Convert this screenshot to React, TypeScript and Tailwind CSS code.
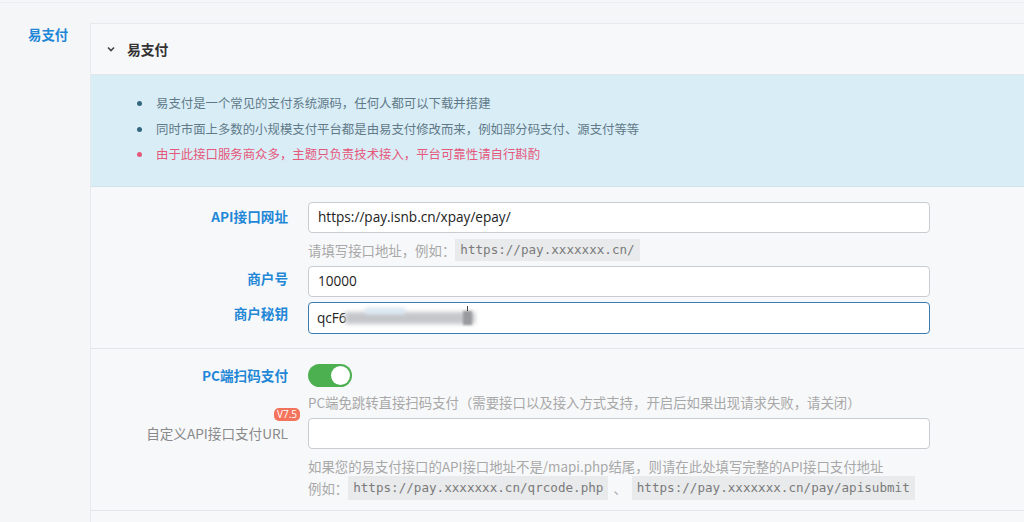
import React from "react";

const cjk = { fontFamily: '"Noto Sans CJK SC", "Noto Sans", sans-serif' };
const latin = { fontFamily: '"Open Sans", "Noto Sans CJK SC", sans-serif' };
const mono = { fontFamily: '"DejaVu Sans Mono", "Liberation Mono", monospace' };

function Code({ children }: { children: React.ReactNode }) {
  return (
    <span className="bg-[#e9eaec] text-[#7a7a7a] px-[5px] py-[2px] text-[12.6px]" style={mono}>
      {children}
    </span>
  );
}

function Label({ children, bold = true, className = "" }: { children: React.ReactNode; bold?: boolean; className?: string }) {
  return (
    <div
      className={`w-[197px] shrink-0 text-right text-[13.6px] ${bold ? "font-bold text-[#1f87d6]" : "text-[#8a8a8a]"} ${className}`}
      style={cjk}
    >
      {children}
    </div>
  );
}

export default function App() {
  return (
    <div className="w-[1024px] h-[522px] bg-[#f5f6f8] overflow-hidden" style={cjk}>
      <div className="h-[3px] border-b border-[#eceef1]" />
      <div className="flex pt-[20px]">
        <div className="w-[90px] shrink-0 pl-[28px] pt-[1px] text-[13.4px] font-bold text-[#1f87d6] leading-[20px]">
          易支付
        </div>
        <div className="w-[960px] shrink-0 border border-[#e7e9ec] bg-[#f7f8fa]">
          {/* header */}
          <div className="h-[51px] flex items-center pl-[15px] border-b border-[#e3e6e9]">
            <svg width="10" height="10" viewBox="0 0 10 10" className="mr-[11px]">
              <path d="M2 3.5 L5 6.5 L8 3.5" fill="none" stroke="#444" strokeWidth="1.6" />
            </svg>
            <span className="text-[13.8px] font-bold text-[#333]">易支付</span>
          </div>
          {/* info */}
          <div className="h-[112px] bg-[#d9edf7] pt-[16px] pl-[44px] border-b border-[#d0e4ee]">
            <ul className="text-[12.4px] leading-[25.5px]">
              <li className="flex items-center text-[#607a88]">
                <span className="w-[5px] h-[5px] rounded-full bg-[#33677f] mr-[14px] ml-[2px]" />
                易支付是一个常见的支付系统源码，任何人都可以下载并搭建
              </li>
              <li className="flex items-center text-[#607a88]">
                <span className="w-[5px] h-[5px] rounded-full bg-[#33677f] mr-[14px] ml-[2px]" />
                同时市面上多数的小规模支付平台都是由易支付修改而来，例如部分码支付、源支付等等
              </li>
              <li className="flex items-center text-[#e5587a]">
                <span className="w-[5px] h-[5px] rounded-full bg-[#e5587a] mr-[14px] ml-[2px]" />
                由于此接口服务商众多，主题只负责技术接入，平台可靠性请自行斟酌
              </li>
            </ul>
          </div>
          {/* section 1 */}
          <div className="pt-[15px] pb-[14px] border-b border-[#e3e6e9]">
            <div className="flex gap-[20px]">
              <Label className="pt-[4px]">API接口网址</Label>
              <div className="w-[622px]">
                <div
                  className="h-[31px] bg-white border border-[#c9ccd0] rounded-[4px] flex items-center px-[9px] text-[13.6px] text-[#222]"
                  style={latin}
                >
                  https://pay.isnb.cn/xpay/epay/
                </div>
                <div className="h-[33px] pt-[1px] flex items-center text-[13.4px] text-[#a8a8a8]">
                  请填写接口地址，例如：<Code>https://pay.xxxxxxx.cn/</Code>
                </div>
              </div>
            </div>
            <div className="flex gap-[20px]">
              <Label className="pt-[2px]">商户号</Label>
              <div
                className="w-[622px] h-[31px] bg-white border border-[#c9ccd0] rounded-[4px] flex items-center px-[9px] text-[13.6px] text-[#222]"
                style={latin}
              >
                10000
              </div>
            </div>
            <div className="flex gap-[20px] mt-[5px]">
              <Label className="pt-[1px]">商户秘钥</Label>
              <div
                className="w-[622px] h-[32px] bg-white border-[1.5px] border-[#3a7bb0] rounded-[4px] flex items-center px-[8px] text-[13.6px] text-[#222]"
                style={latin}
              >
                qcF6
                <span className="relative ml-[-2px] h-[20px] w-[140px] inline-block">
                  <span className="absolute left-0 top-[4px] w-[130px] h-[12px] bg-[#c4c6ca] blur-[2px]" />
                  <span className="absolute left-[20px] top-[0px] w-[40px] h-[6px] bg-[#d8e6f2] blur-[2px]" />
                  <span className="absolute left-[118px] top-[3px] w-[9px] h-[14px] bg-[#9a9b9e] blur-[1px]" />
                  <span className="absolute left-[122px] top-[-2px] w-[1px] h-[5px] bg-[#444]" />
                </span>
              </div>
            </div>
          </div>
          {/* section 2 */}
          <div className="pt-[15px] pb-[10px] border-b border-[#e3e6e9]">
            <div className="flex gap-[20px]">
              <Label className="pt-[1px]">PC端扫码支付</Label>
              <div className="w-[622px]">
                <div className="w-[44px] h-[23px] rounded-full bg-[#4caf50] relative">
                  <div className="absolute right-[2px] top-[2px] w-[19px] h-[19px] rounded-full bg-white" />
                </div>
                <div className="h-[31px] flex items-center text-[13.4px] text-[#a8a8a8] whitespace-nowrap">
                  PC端免跳转直接扫码支付（需要接口以及接入方式支持，开启后如果出现请求失败，请关闭）
                </div>
              </div>
            </div>
            <div className="flex gap-[20px]">
              <Label bold={false} className="pt-[5px] relative">
                <span className="absolute right-[-12px] top-[-10px] bg-[#f4735c] text-white text-[10px] leading-[13px] px-[3px] rounded-[5px]" style={latin}>
                  V7.5
                </span>
                自定义API接口支付URL
              </Label>
              <div className="w-[622px]">
                <div className="h-[31px] bg-white border border-[#c9ccd0] rounded-[4px]" />
                <div className="mt-[7px] text-[13.4px] leading-[20px] text-[#a8a8a8] whitespace-nowrap">
                  <div>如果您的易支付接口的API接口地址不是/mapi.php结尾，则请在此处填写完整的API接口支付地址</div>
                  <div className="flex items-center">
                    例如：<Code>https://pay.xxxxxxx.cn/qrcode.php</Code>
                    <span className="mx-[5px]">、</span>
                    <Code>https://pay.xxxxxxx.cn/pay/apisubmit</Code>
                  </div>
                </div>
              </div>
            </div>
          </div>
          <div className="h-[20px]" />
        </div>
      </div>
    </div>
  );
}
